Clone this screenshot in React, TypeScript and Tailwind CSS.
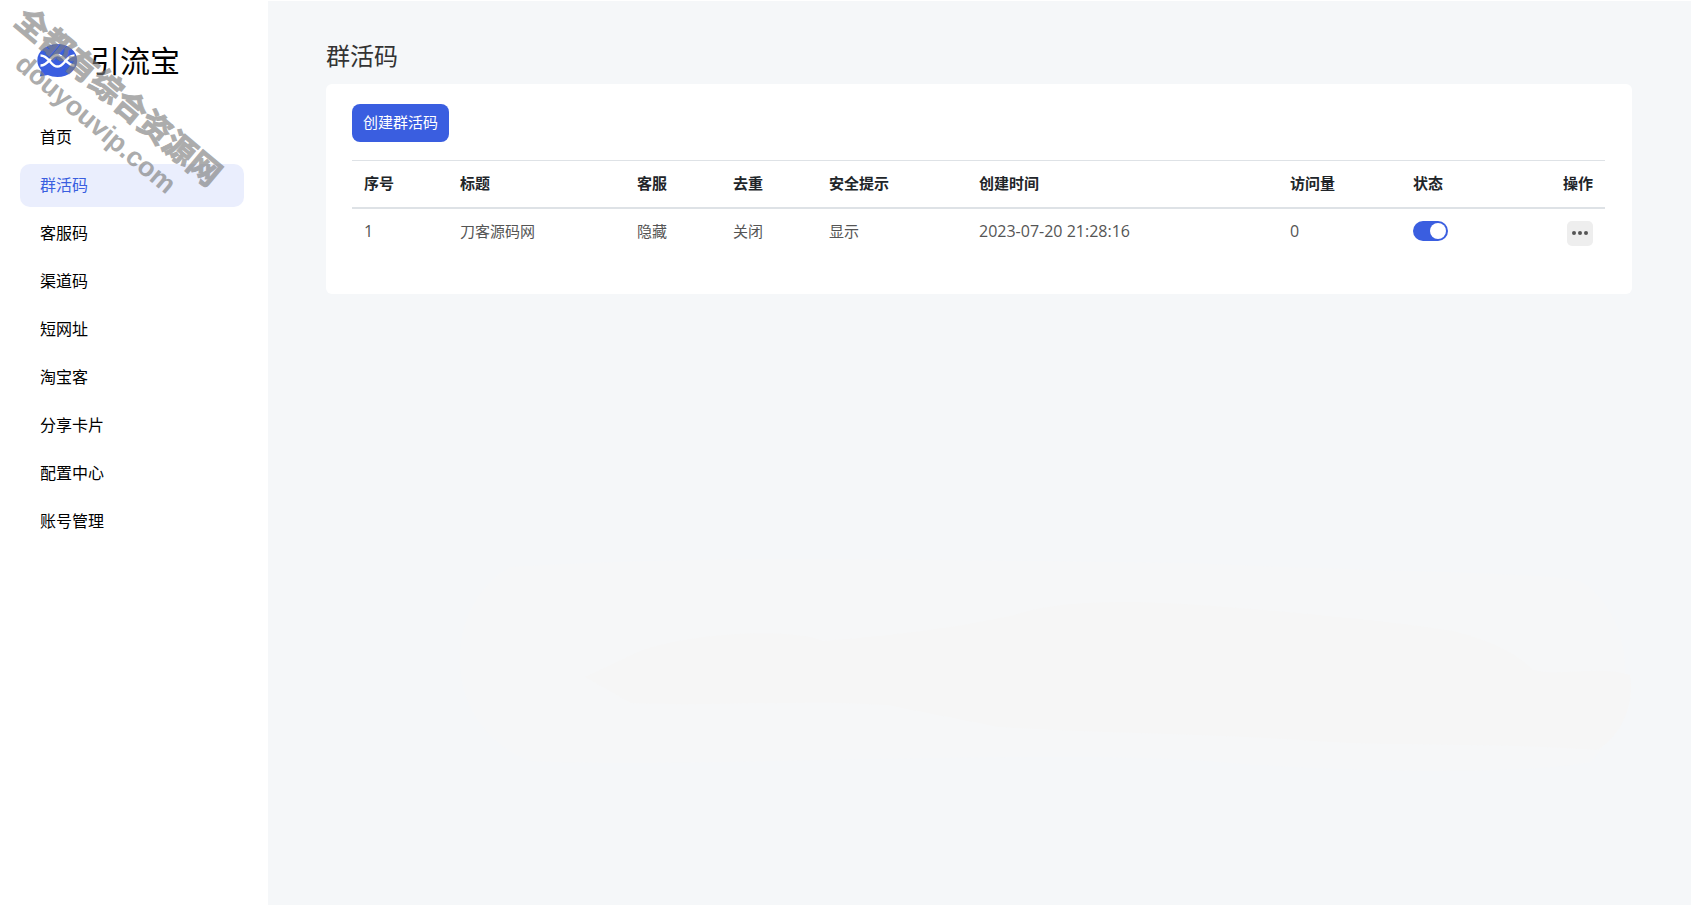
const navItems = ['首页', '群活码', '客服码', '渠道码', '短网址', '淘宝客', '分享卡片', '配置中心', '账号管理'];

const columns = [
  { label: '序号', width: 'w-[96px]', cell: 'text-base' },
  { label: '标题', width: 'w-[177px]', cell: '' },
  { label: '客服', width: 'w-[96px]', cell: '' },
  { label: '去重', width: 'w-[96px]', cell: '' },
  { label: '安全提示', width: 'w-[150px]', cell: '' },
  { label: '创建时间', width: 'w-[311px]', cell: 'text-base' },
  { label: '访问量', width: 'w-[123px]', cell: 'text-base' },
  { label: '状态', width: 'w-[102px]', cell: '' },
  { label: '操作', width: 'w-[102px] text-right', cell: '' },
];

const rows = [['1', '刀客源码网', '隐藏', '关闭', '显示', '2023-07-20 21:28:16', '0']];

function Logo() {
  return (
    <div className="flex h-[34px] items-center gap-3 pl-[17px]">
      <svg className="h-[34px] w-[41px]" viewBox="0 0 41 34" fill="none" aria-hidden="true">
        <path
          d="M20.500 0C31.500 0 40.200 7.200 40.200 16.500S31.500 33 20.500 33C17 33 13.500 32.300 10.800 31L2.800 32.400L4.300 26.300C1.800 23.500 0.300 20.200 0.300 16.500C0.300 7.200 9.500 0 20.500 0Z"
          fill="#3a5ee0"
        />
        <path
          d="M3.500 11.500C12 11.500 13.500 22.500 20.500 22.500C27.500 22.500 29 11.500 37.500 11.500M3.500 21.500C12 21.500 13.500 11 20.500 11C27.500 11 29 21.500 37.500 21.500"
          stroke="#fff"
          strokeWidth="2.400"
        />
      </svg>
      <span className="text-[30px] leading-[34px] text-black">引流宝</span>
    </div>
  );
}

function Backdrop() {
  return (
    <svg
      aria-hidden="true"
      className="pointer-events-none absolute top-[556px] left-[182px] w-[calc(100%-236px)]"
      viewBox="0 0 1187 218"
    >
      <path
        d="M60 10C300 -4 500 4 740 6C900 14 1080 14 1130 24C1190 60 1187 160 1140 205C1080 218 900 215 780 206C620 190 240 212 80 204C-10 170 -10 50 60 10Z"
        fill="#f6f7f8"
      />
      <path
        d="M135 120L190 94C240 76 340 70 373 84C450 78 510 70 564 58C620 40 700 44 788 51C880 58 950 66 1003 74C1050 86 1070 100 1083 113C1110 120 1150 108 1180 118C1185 150 1170 180 1147 193C1050 185 930 190 852 183C740 176 640 176 549 170L437 148C350 142 260 150 181 146Z"
        fill="#f6f6f6"
      />
    </svg>
  );
}

function Watermark() {
  return (
    <div
      aria-hidden="true"
      className="pointer-events-none absolute top-[74px] left-[-22px] flex w-[258px] rotate-[40deg] flex-col items-center font-bold whitespace-nowrap text-[#808080] opacity-65"
    >
      <div className="text-[32px] leading-[35px] [-webkit-text-stroke:1px_#808080]">全都有综合资源网</div>
      <div className="font-['Liberation_Sans',sans-serif] text-[27px] leading-[38px]">douyouvip.com</div>
    </div>
  );
}

export default function App() {
  return (
    <div className="relative flex min-h-screen overflow-hidden bg-white font-['Open_Sans','Noto_Sans_CJK_SC',sans-serif]">
      <aside className="w-[268px] shrink-0 pt-11 pr-6 pl-5">
        <Logo />
        <nav className="mt-[38px] flex flex-col gap-[5px]">
          {navItems.map((item) => (
            <a
              key={item}
              href="#"
              aria-current={item === '群活码' ? 'page' : undefined}
              className={
                item === '群活码'
                  ? 'flex h-[43px] items-center rounded-[10px] bg-[#eaeefd] px-5 pb-px text-base text-[#3a5ee0]'
                  : 'flex h-[43px] items-center rounded-[10px] px-5 pb-px text-base text-black'
              }
            >
              {item}
            </a>
          ))}
        </nav>
      </aside>

      <main className="relative mt-px min-w-0 flex-1 bg-[#f5f7f9] pt-[37px] pr-[59px] pl-[58px]">
        <Backdrop />
        <h1 className="text-2xl leading-[36px] text-[#333]">群活码</h1>
        <section className="mt-[10px] rounded-md bg-white pt-5 pr-[27px] pb-10 pl-[26px]">
          <button type="button" className="block h-[38px] rounded-lg bg-[#3a5ee0] px-[11px] pb-0.5 text-[15px] text-white">
            创建群活码
          </button>
          <table className="mt-[18px] w-full table-fixed border-collapse text-left text-[15px]">
            <thead>
              <tr className="h-[47px] border-t border-b-2 border-[#dee2e6] text-[#212529]">
                {columns.map((column) => (
                  <th key={column.label} scope="col" className={`px-3 pb-0.5 font-bold ${column.width}`}>
                    {column.label}
                  </th>
                ))}
              </tr>
            </thead>
            <tbody>
              {rows.map((row) => (
                <tr key={row[0]} className="h-[46px] text-[#555]">
                  {row.map((cell, index) => (
                    <td key={columns[index].label} className={`px-3 ${columns[index].cell}`}>
                      {cell}
                    </td>
                  ))}
                  <td className="px-3 pb-px">
                    <label className="block h-5 w-[35px]">
                      <input type="checkbox" defaultChecked aria-label="状态" className="peer sr-only" />
                      <span className="flex h-5 w-[35px] items-center justify-start rounded-full bg-[#ccc] p-0.5 peer-checked:justify-end peer-checked:bg-[#3a5ee0]">
                        <span className="size-4 rounded-full bg-white" />
                      </span>
                    </label>
                  </td>
                  <td className="px-3 pt-1">
                    <button
                      type="button"
                      aria-label="操作"
                      className="ml-auto flex h-[25px] w-[26px] items-center justify-center rounded-[5px] bg-[#eee] text-[#555]"
                    >
                      <svg className="h-1 w-4" viewBox="0 0 16 4" fill="currentColor" aria-hidden="true">
                        <circle cx="2" cy="2" r="2" />
                        <circle cx="8" cy="2" r="2" />
                        <circle cx="14" cy="2" r="2" />
                      </svg>
                    </button>
                  </td>
                </tr>
              ))}
            </tbody>
          </table>
        </section>
      </main>
      <Watermark />
    </div>
  );
}
